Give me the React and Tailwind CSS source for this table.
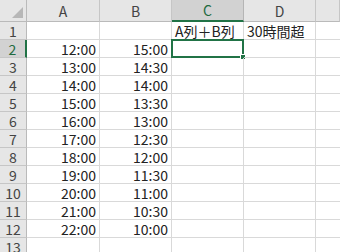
import React from 'react';

const cols = ['A', 'B', 'C', 'D', ''];

const rows = [
  ['', '', 'A列＋B列', '30時間超'],
  ['12:00', '15:00', '', ''],
  ['13:00', '14:30', '', ''],
  ['14:00', '14:00', '', ''],
  ['15:00', '13:30', '', ''],
  ['16:00', '13:00', '', ''],
  ['17:00', '12:30', '', ''],
  ['18:00', '12:00', '', ''],
  ['19:00', '11:30', '', ''],
  ['20:00', '11:00', '', ''],
  ['21:00', '10:30', '', ''],
  ['22:00', '10:00', '', ''],
  ['', '', '', ''],
];

const selRow = 1;
const selCol = 2;

function HeaderCell({ label, active }) {
  return (
    <div
      className={
        'h-[22px] flex items-center justify-center border-r border-b ' +
        (active
          ? 'bg-[#d2d2d2] text-[#1f6b3f] border-r-[#b5b5b5] border-b-2 border-b-[#217346]'
          : 'bg-[#e6e6e6] text-[#444] border-r-[#c6c6c6] border-b-[#bababa]')
      }
    >
      {label}
    </div>
  );
}

function RowHeader({ n, active }) {
  return (
    <div
      className={
        'h-[18px] flex items-center justify-center border-b ' +
        (active
          ? 'bg-[#d2d2d2] text-[#1f6b3f] border-b-[#c6c6c6] border-r-2 border-r-[#217346]'
          : 'bg-[#e6e6e6] text-[#444] border-b-[#c6c6c6] border-r border-r-[#bababa]')
      }
    >
      {n}
    </div>
  );
}

export default function App() {
  return (
    <div
      className="w-[340px] h-[252px] overflow-hidden bg-white text-[14px] leading-none text-[#222]"
      style={{ fontFamily: '"Noto Sans CJK JP", "DejaVu Sans", sans-serif' }}
    >
      <div className="grid grid-cols-[27px_73px_72px_72px_72px_1fr]">
        <div className="h-[22px] relative bg-[#e6e6e6] border-r border-b border-r-[#bababa] border-b-[#bababa]">
          <div className="absolute right-[3px] bottom-[3px] w-0 h-0 border-l-[11px] border-l-transparent border-b-[11px] border-b-[#b7b7b7]" />
        </div>
        {cols.map((c, i) => (
          <HeaderCell key={i} label={c} active={i === selCol} />
        ))}

        {rows.map((r, ri) => (
          <React.Fragment key={ri}>
            <RowHeader n={ri + 1} active={ri === selRow} />
            {r.map((v, ci) => {
              const isTime = ci < 2;
              return (
                <div
                  key={ci}
                  className={
                    'h-[18px] relative flex items-center border-r border-b border-[#d9d9d9] whitespace-nowrap ' +
                    (isTime ? 'justify-end pr-[3px]' : 'justify-start pl-[3px]')
                  }
                >
                  {v}
                  {ri === selRow && ci === selCol && (
                    <div className="absolute -left-[1px] -top-[1px] w-[73px] h-[19px] border-2 border-[#217346]">
                      <div className="absolute -right-[4px] -bottom-[4px] w-[6px] h-[6px] bg-[#217346] border border-white" />
                    </div>
                  )}
                </div>
              );
            })}
            <div className="h-[18px] border-b border-[#d9d9d9]" />
          </React.Fragment>
        ))}
      </div>
    </div>
  );
}
